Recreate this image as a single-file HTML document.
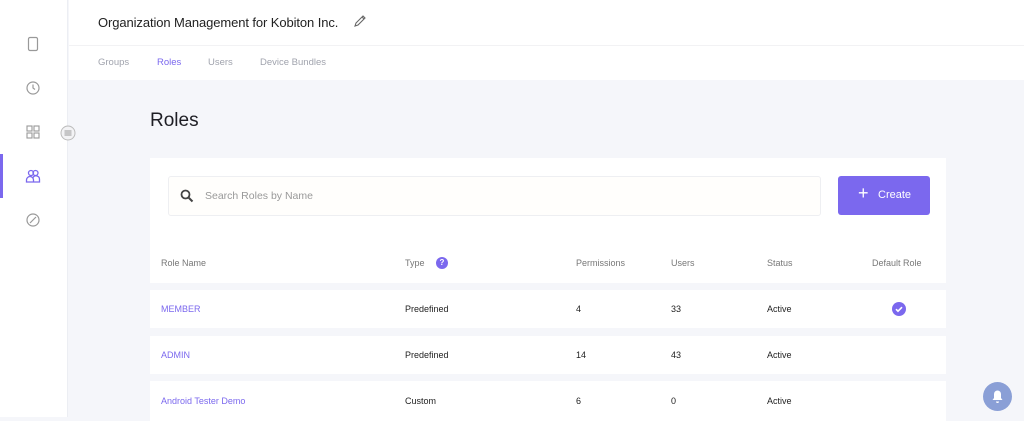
<!DOCTYPE html>
<html><head><meta charset="utf-8"><style>
*{margin:0;padding:0;box-sizing:border-box}
body{width:1024px;height:417px;overflow:hidden;background:#f5f6fa;font-family:"Liberation Sans",sans-serif;position:relative}
.side{position:absolute;left:0;top:0;width:68px;height:417px;background:#fff;border-right:1px solid #eceef3}
.side svg{position:absolute;left:25px}
.act{position:absolute;left:0;top:154px;width:3px;height:44px;background:#7b68ee}
.hdr{position:absolute;left:69px;top:0;right:0;height:80px;background:#fff}
.title{position:absolute;left:29px;top:15px;font-size:13px;color:#222;letter-spacing:-0.1px}
.tabs{position:absolute;top:57px;font-size:9.5px;color:#a0a3ad}
.tab{position:absolute;white-space:nowrap}
h1{position:absolute;left:150px;top:110px;font-size:19px;font-weight:normal;color:#1e1e24}
.card{position:absolute;left:150px;top:158px;width:796px;height:85px;background:#fff}
.search{position:absolute;left:168px;top:176px;width:653px;height:40px;border:1px solid #eeeff2;border-radius:3px;background:#fffefc}
.search span{position:absolute;left:36px;top:13px;font-size:10.5px;color:#999}
.btn{position:absolute;left:838px;top:176px;width:92px;height:39px;background:#7b68ee;border-radius:3px;color:#fff;font-size:11px}
.row{position:absolute;left:150px;width:796px;background:#fff;font-size:9px;color:#222}
.row div{position:absolute;top:50%;transform:translateY(-50%);white-space:nowrap}
.th{color:#777}
.lnk{color:#7b68ee}
</style></head><body>
<div class="side">
<svg style="top:36px" width="16" height="16" viewBox="0 0 16 16"><rect x="3.5" y="1.5" width="9" height="13" rx="1.5" fill="none" stroke="#999" stroke-width="1.2"/></svg>
<svg style="top:80px" width="16" height="16" viewBox="0 0 16 16"><circle cx="8" cy="8" r="6" fill="none" stroke="#999" stroke-width="1.2"/><path d="M8 4.5V8l2 1.5" fill="none" stroke="#999" stroke-width="1.2"/></svg>
<svg style="top:124px" width="16" height="16" viewBox="0 0 16 16"><g fill="none" stroke="#999" stroke-width="1.1"><rect x="2" y="2" width="5" height="5"/><rect x="9" y="2" width="5" height="5"/><rect x="2" y="9" width="5" height="5"/><rect x="9" y="9" width="5" height="5"/></g></svg>
<div class="act"></div>
<svg style="top:168px" width="16" height="16" viewBox="0 0 16 16"><g fill="none" stroke="#7b68ee" stroke-width="1.3"><circle cx="6" cy="5" r="2.5"/><circle cx="10.5" cy="5" r="2.5"/><path d="M1.5 14v-2a3.5 3.5 0 0 1 7 0v2zM8 9.5a3.5 3.5 0 0 1 6.5 2V14H8.5"/></g></svg>
<svg style="top:212px" width="16" height="16" viewBox="0 0 16 16"><circle cx="8" cy="8" r="6" fill="none" stroke="#999" stroke-width="1.2"/><path d="M5 11l6-6" stroke="#999" stroke-width="1.2"/></svg>
</div>
<svg style="position:absolute;left:60px;top:125px" width="16" height="16" viewBox="0 0 16 16"><circle cx="8" cy="8" r="7" fill="#f3f3f5" stroke="#bbb" stroke-width="1"/><path d="M4.5 6h7M4.5 8h7M4.5 10h7" stroke="#999" stroke-width="1"/></svg>
<div class="hdr">
<div class="title">Organization Management for Kobiton Inc.</div>
<svg style="position:absolute;left:284px;top:14px" width="14" height="14" viewBox="0 0 14 14"><path d="M2 12l1-3 7-7 2 2-7 7zM9 3l2 2" fill="none" stroke="#666" stroke-width="1.1"/></svg>
<div style="position:absolute;left:0;right:0;top:45px;border-top:1px solid #f2f2f4"></div>
<div class="tabs"><span class="tab" style="left:29px">Groups</span><span class="tab" style="left:88px;color:#7b68ee">Roles</span><span class="tab" style="left:139px">Users</span><span class="tab" style="left:191px">Device Bundles</span></div>
</div>
<h1>Roles</h1>
<div class="card"></div>
<div class="search"><svg style="position:absolute;left:11px;top:12px" width="14" height="14" viewBox="0 0 14 14"><circle cx="5.5" cy="5.5" r="4" fill="none" stroke="#444" stroke-width="1.8"/><path d="M8.5 8.5l4 4" stroke="#444" stroke-width="2"/></svg><span>Search Roles by Name</span></div>
<div class="btn"><span style="position:absolute;left:20px;top:7px;font-size:18px;font-weight:300">+</span><span style="position:absolute;left:40px;top:13px">Create</span></div>
<div class="row" style="top:243px;height:40px">
<div class="th" style="left:11px">Role Name</div>
<div class="th" style="left:255px">Type</div>
<div style="left:286px;width:12px;height:12px;border-radius:50%;background:#7b68ee;color:#fff;font-size:8px;text-align:center;line-height:12px;font-weight:bold">?</div>
<div class="th" style="left:426px">Permissions</div>
<div class="th" style="left:521px">Users</div>
<div class="th" style="left:617px">Status</div>
<div class="th" style="left:722px">Default Role</div>
</div>
<div class="row" style="top:290px;height:38px">
<div class="lnk" style="left:11px">MEMBER</div><div style="left:255px">Predefined</div><div style="left:426px">4</div><div style="left:521px">33</div><div style="left:617px">Active</div>
<div style="left:742px;width:14px;height:14px;border-radius:50%;background:#7b68ee"><svg width="14" height="14" viewBox="0 0 14 14" style="position:absolute;left:0;top:0"><path d="M4 7.2l2 2 4-4" fill="none" stroke="#fff" stroke-width="1.6"/></svg></div>
</div>
<div class="row" style="top:336px;height:38px">
<div class="lnk" style="left:11px">ADMIN</div><div style="left:255px">Predefined</div><div style="left:426px">14</div><div style="left:521px">43</div><div style="left:617px">Active</div>
</div>
<div class="row" style="top:381px;height:40px">
<div class="lnk" style="left:11px">Android Tester Demo</div><div style="left:255px">Custom</div><div style="left:426px">6</div><div style="left:521px">0</div><div style="left:617px">Active</div>
</div>
<div style="position:absolute;left:983px;top:382px;width:29px;height:29px;border-radius:50%;background:#8a9fd6"><svg width="29" height="29" viewBox="0 0 29 29"><path d="M9.5 18h10l-1.5-2v-4a3.5 3.5 0 0 0-7 0v4zM13 19.5a1.5 1.5 0 0 0 3 0" fill="#fff"/></svg></div>
</body></html>
